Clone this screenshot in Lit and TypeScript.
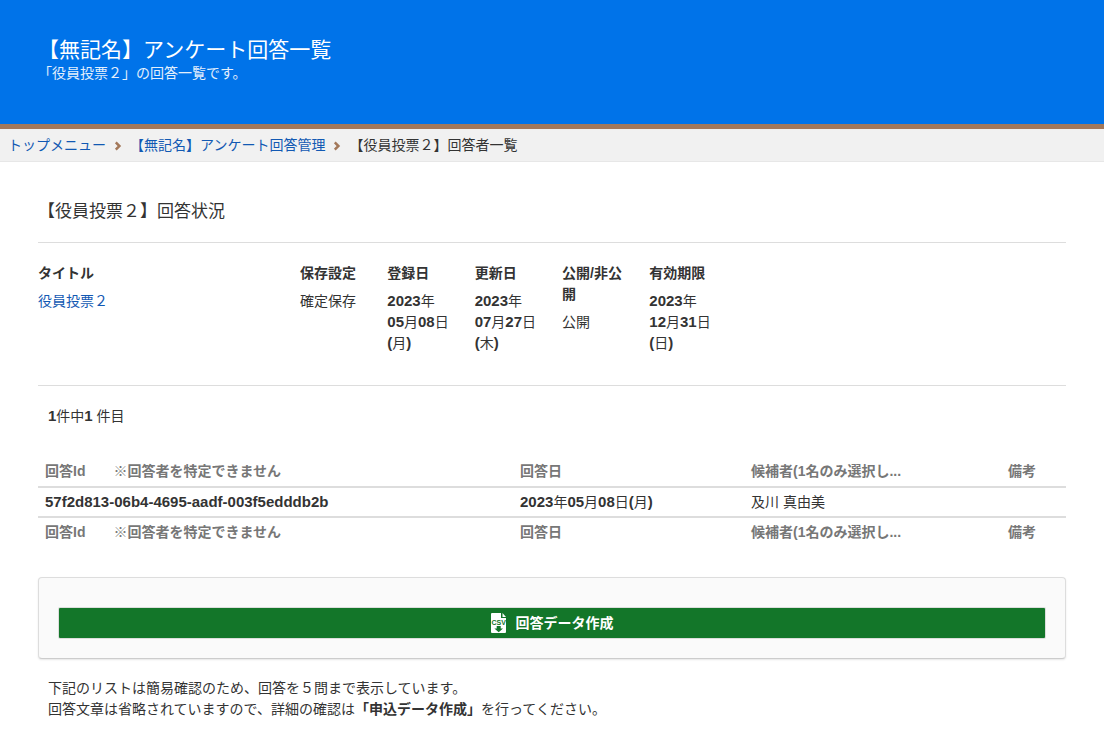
import { LitElement, html, css } from "lit";
import { customElement } from "lit/decorators.js";

const chevron = html`<svg class="chevron" viewBox="0 0 8 10" aria-hidden="true"><path d="M1.8 1.4l3.6 3.6-3.6 3.6" fill="none" stroke="currentColor" stroke-width="2.5" /></svg>`;

const csvIcon = html`<svg class="csv" viewBox="0 0 16 20" aria-hidden="true">
  <path fill="#fff" d="M1 0h9v5h5v14a1 1 0 0 1-1 1H1a1 1 0 0 1-1-1V1a1 1 0 0 1 1-1zM11.5 0L15 4h-3.5z" />
  <text x="7.7" y="12" text-anchor="middle">CSV</text>
  <path fill="#137629" d="M5.7 13h4v2.4H12L7.7 19.2 3.4 15.4h2.3z" />
</svg>`;

const ymd = (y: string, m: string, d: string, w: string) =>
  html`<b>${y}</b>年<span class="day"><b>${m}</b>月<b>${d}</b>日</span><wbr><span class="day"><b>(</b>${w}<b>)</b></span>`;

const headings = () => html`<tr>
  <th scope="col"><span class="id">回答Id</span>※回答者を特定できません</th>
  <th scope="col">回答日</th>
  <th scope="col">候補者(1名のみ選択し...</th>
  <th scope="col">備考</th>
</tr>`;

@customElement("app-root")
export class AppRoot extends LitElement {
  static styles = css`
    :host {
      display: block;
      color: #333;
      background: #fff;
      font: 14px/21px "Liberation Sans", "Noto Sans CJK JP", sans-serif;
    }
    * { box-sizing: border-box; }
    a { color: #1259b3; text-decoration: none; }
    h1, h2, p, dl, dd { margin: 0; font-weight: 400; }
    b { font-size: 15px; line-height: 1; }
    .banner {
      background: #0073e9;
      color: #fff;
      border-bottom: 5px solid #a3785a;
      padding: 37px 38px 40px;
    }
    .banner h1 { font-size: 21px; line-height: 26px; }
    .banner p { color: #e3effc; }
    .crumbs {
      display: flex;
      flex-wrap: wrap;
      align-items: center;
      gap: 8px;
      padding: 6px 8px 5px;
      background: #f1f1f1;
      border-bottom: 1px solid #e7e7e7;
    }
    .chevron { width: 8px; height: 10px; color: #a3785a; }
    main { padding: 38px; }
    h2 {
      font-size: 17px;
      line-height: 24px;
      padding-bottom: 18px;
      border-bottom: 1px solid #ddd;
    }
    .facts {
      padding: 20px 0 31px;
      border-bottom: 1px solid #ddd;
    }
    .facts dl {
      display: grid;
      grid-template-columns: 3fr repeat(9, 1fr);
      margin: 0 -10px;
    }
    .facts dl > div { padding: 0 10px; }
    dt { font-weight: 700; margin-bottom: 7px; }
    .day { white-space: nowrap; }
    .count { padding: 20px 10px 30px; }
    table { width: 100%; border-collapse: collapse; table-layout: fixed; }
    .c-id { width: 475px; }
    .c-date { width: 231px; }
    .c-name { width: 257px; }
    .c-note { width: 65px; }
    th, td { height: 30px; padding: 0 7px; text-align: left; }
    th { color: #777; }
    td { border-top: 2px solid #ddd; border-bottom: 2px solid #ddd; }
    .id { margin-right: 28px; }
    .panel {
      margin: 30px 0 19px;
      padding: 30px 20px 20px;
      background: #fafafa;
      border: 1px solid #ddd;
      border-bottom-color: #ccc;
      border-radius: 4px;
      box-shadow: 0 1px 2px rgba(0, 0, 0, 0.1);
    }
    button {
      display: flex;
      width: 100%;
      height: 30px;
      align-items: center;
      justify-content: center;
      gap: 9px;
      border: 0;
      border-radius: 1px;
      box-shadow: 0 0 0 1px #dcdedc;
      background: #137629;
      color: #fff;
      font: 700 14px/21px "Liberation Sans", "Noto Sans CJK JP", sans-serif;
    }
    .csv { width: 16px; height: 20px; }
    .csv text { font: 700 7px "Liberation Sans", sans-serif; fill: #137629; }
    .note { padding: 0 10px; }
    .note b { font-size: 14px; }
  `;

  render() {
    return html`
      <header class="banner"><h1>【無記名】アンケート回答一覧</h1><p>「役員投票２」の回答一覧です。</p></header>
      <nav class="crumbs"><a href="#">トップメニュー</a>${chevron}<a href="#">【無記名】アンケート回答管理</a>${chevron}<span>【役員投票２】回答者一覧</span></nav>
      <main>
        <h2>【役員投票２】回答状況</h2>
        <div class="facts"><dl>
          <div><dt>タイトル</dt><dd><a href="#">役員投票２</a></dd></div>
          <div><dt>保存設定</dt><dd>確定保存</dd></div>
          <div><dt>登録日</dt><dd>${ymd("2023", "05", "08", "月")}</dd></div>
          <div><dt>更新日</dt><dd>${ymd("2023", "07", "27", "木")}</dd></div>
          <div><dt>公開/非公開</dt><dd>公開</dd></div>
          <div><dt>有効期限</dt><dd>${ymd("2023", "12", "31", "日")}</dd></div>
        </dl></div>
        <p class="count"><b>1</b>件中<b>1</b> 件目</p>
        <table>
          <colgroup><col class="c-id"><col class="c-date"><col class="c-name"><col class="c-note"></colgroup>
          <thead>${headings()}</thead>
          <tbody><tr><td><b>57f2d813-06b4-4695-aadf-003f5edddb2b</b></td><td>${ymd("2023", "05", "08", "月")}</td><td>及川 真由美</td><td></td></tr></tbody>
          <tfoot>${headings()}</tfoot>
        </table>
        <div class="panel"><button type="button">${csvIcon}<span>回答データ作成</span></button></div>
        <p class="note">下記のリストは簡易確認のため、回答を５問まで表示しています。<br />回答文章は省略されていますので、詳細の確認は<b>「申込データ作成」</b>を行ってください。</p>
      </main>`;
  }
}
